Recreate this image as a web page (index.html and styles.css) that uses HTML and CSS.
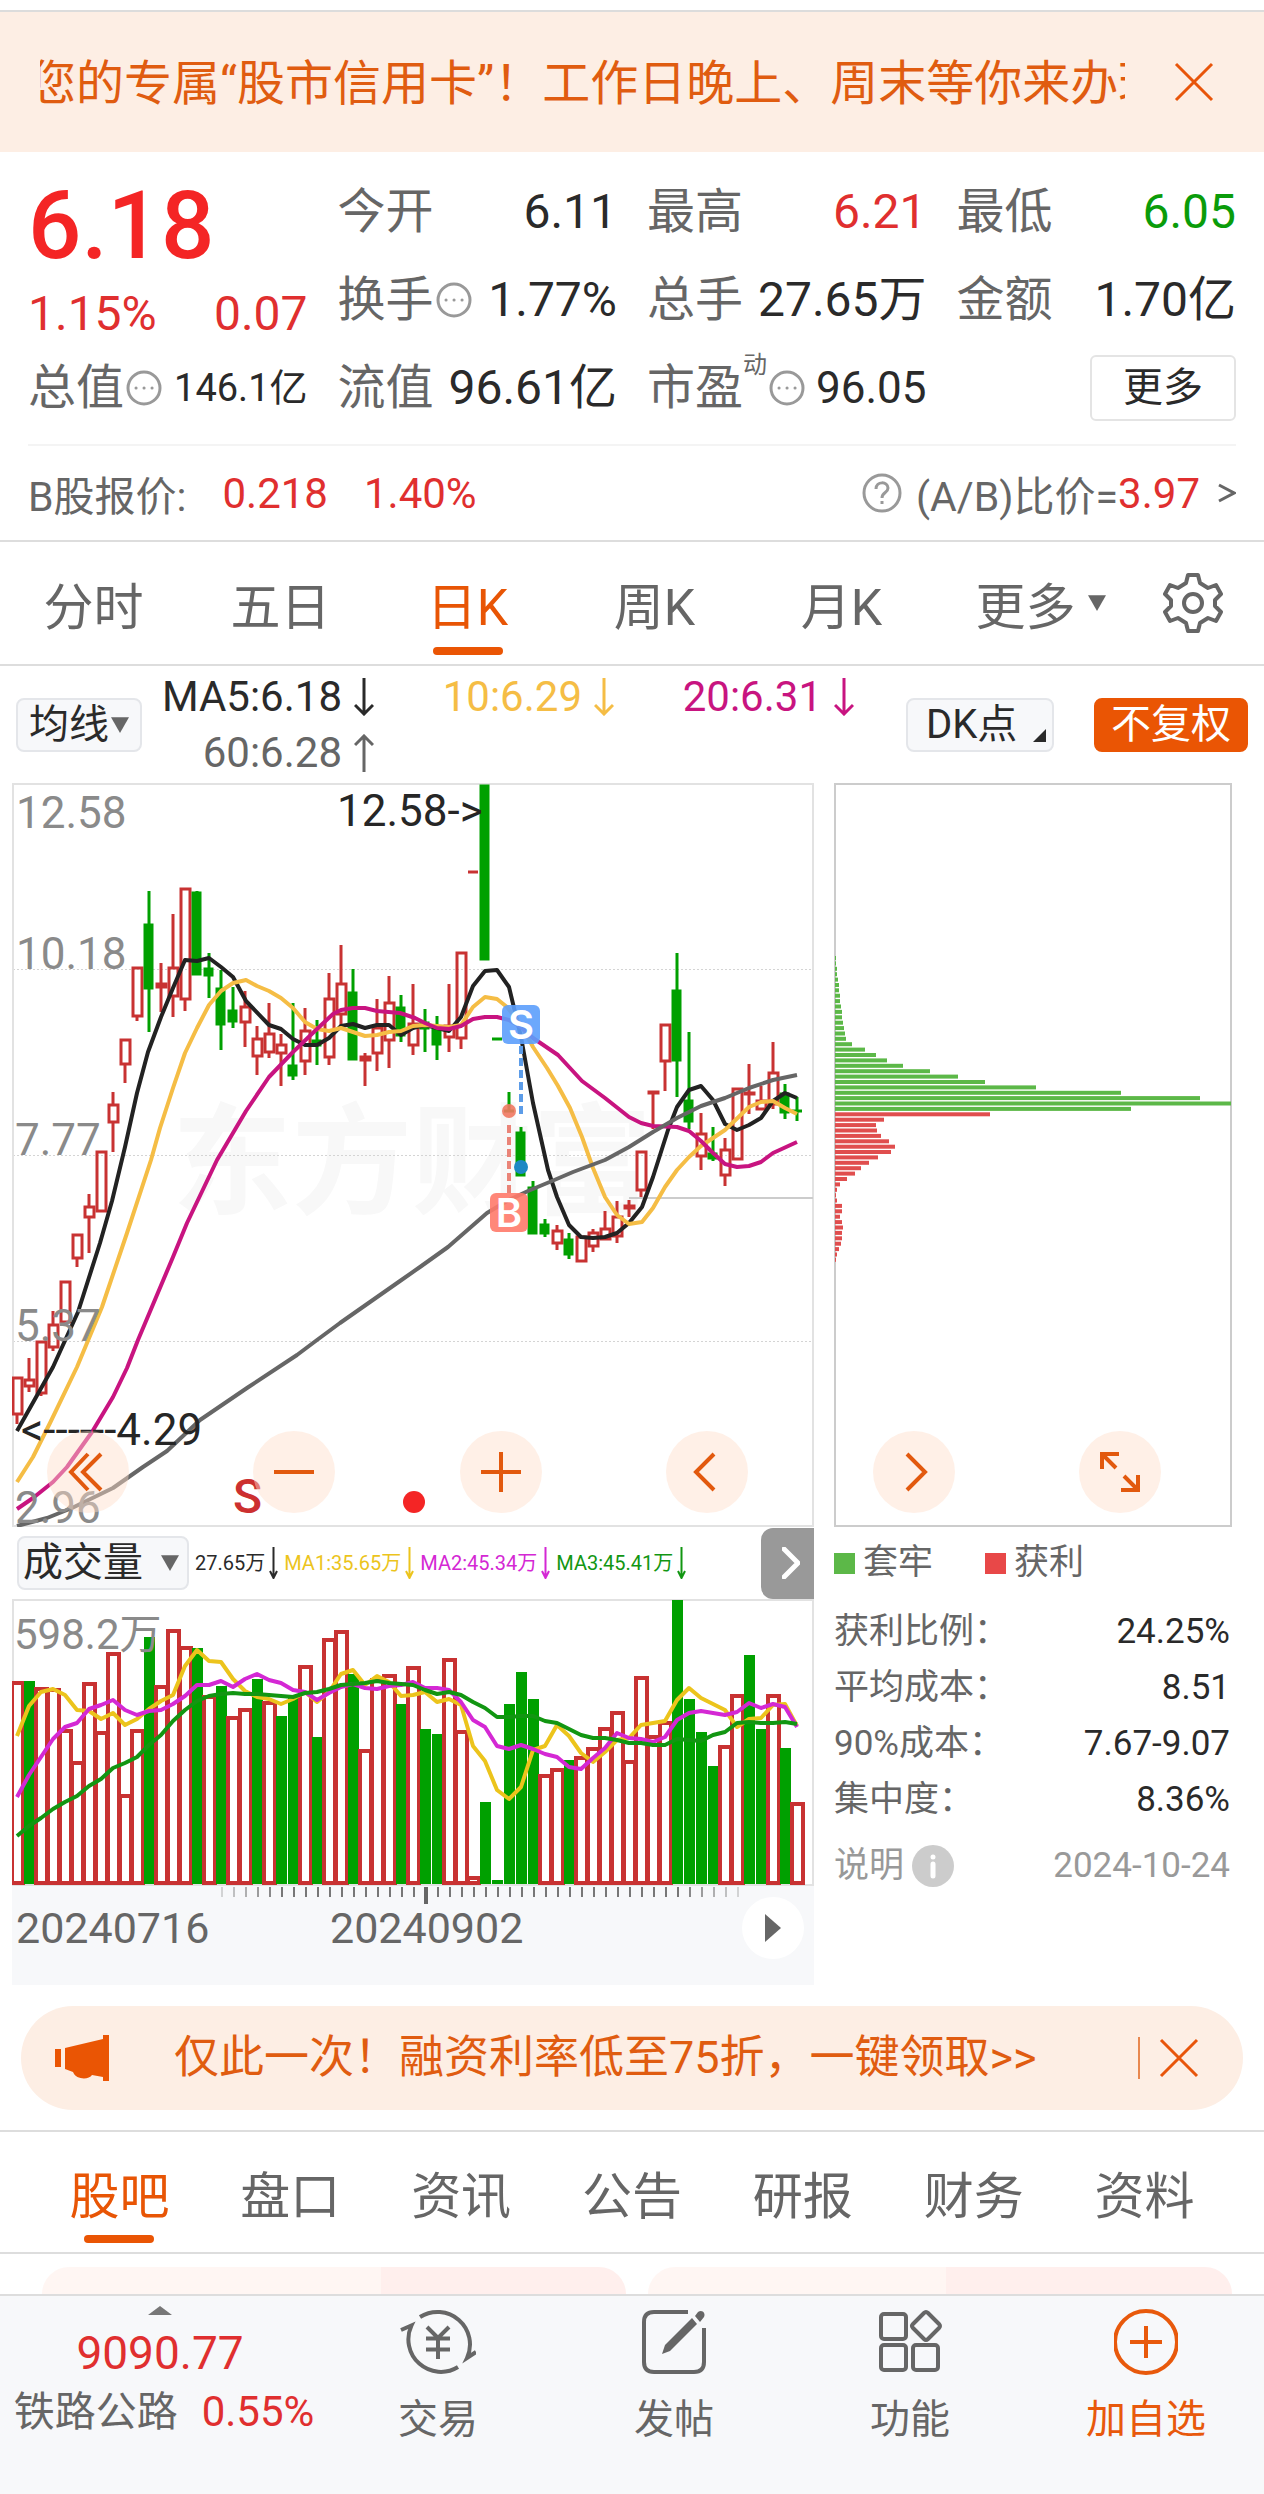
FILE: index.html
```html
<!DOCTYPE html>
<html lang="zh-CN">
<head>
<meta charset="utf-8">
<meta name="viewport" content="width=device-width, initial-scale=1">
<title>日K 行情</title>
<link rel="stylesheet" href="styles.css">
</head>
<body>
<div class="page">
  <aside class="notice">
    <p class="notice-text"><span>您的专属“股市信用卡”！工作日晚上、周末等你来办理</span></p>
    <button class="icon-button" type="button" aria-label="关闭">
      <svg class="close-icon" viewBox="0 0 40 40"><path d="M2 2 38 38M38 2 2 38"/></svg>
    </button>
  </aside>

  <section class="quote">
    <div class="price-block">
      <strong class="price">6.18</strong>
      <div class="change up"><span>1.15%</span><span>0.07</span></div>
    </div>
    <div class="cell"><span class="label">今开</span><span class="value">6.11</span></div>
    <div class="cell"><span class="label">最高</span><span class="value up">6.21</span></div>
    <div class="cell"><span class="label">最低</span><span class="value down">6.05</span></div>
    <div class="cell"><span class="label">换手<svg class="dots" viewBox="0 0 36 36"><circle cx="18" cy="18" r="16"/><path d="M10 18h.1M18 18h.1M26 18h.1"/></svg></span><span class="value">1.77%</span></div>
    <div class="cell"><span class="label">总手</span><span class="value">27.65万</span></div>
    <div class="cell"><span class="label">金额</span><span class="value">1.70亿</span></div>
    <div class="cell"><span class="label">总值<svg class="dots" viewBox="0 0 36 36"><circle cx="18" cy="18" r="16"/><path d="M10 18h.1M18 18h.1M26 18h.1"/></svg></span><span class="value small">146.1亿</span></div>
    <div class="cell"><span class="label">流值</span><span class="value">96.61亿</span></div>
    <div class="cell"><span class="label">市盈<span class="super">动</span><svg class="dots" viewBox="0 0 36 36"><circle cx="18" cy="18" r="16"/><path d="M10 18h.1M18 18h.1M26 18h.1"/></svg></span><span class="value medium">96.05</span></div>
    <div class="cell end"><button class="more-button" type="button">更多</button></div>
  </section>

  <section class="b-share">
    <span class="label">B股报价:</span>
    <span class="up b-price">0.218</span>
    <span class="up">1.40%</span>
    <a class="ratio" href="#ratio">
      <svg class="help" viewBox="0 0 40 40"><circle cx="20" cy="20" r="18"/><path d="M14 16c0-8 12-8 12-1 0 5-6 4-6 10M20 28v3"/></svg>
      <span class="label">(A/B)比价=</span><span class="up">3.97</span><svg class="chev" viewBox="0 0 18 22"><path d="M1 3l15 8-15 8"/></svg>
    </a>
  </section>

  <nav class="period-tabs">
    <a href="#fs">分时</a>
    <a href="#d5">五日</a>
    <a class="active" href="#dk">日K</a>
    <a href="#wk">周K</a>
    <a href="#mk">月K</a>
    <a class="more-tab" href="#more">更多<svg class="tri" viewBox="0 0 16 16"><path d="M0 1h16L8 15z"/></svg></a>
    <button class="icon-button" type="button" aria-label="设置">
      <svg class="gear" viewBox="0 0 60 60"><path d="M25 2h10l2 8 8 5 8-3 5 9-6 6v6l6 6-5 9-8-3-8 5-2 8H25l-2-8-8-5-8 3-5-9 6-6v-6l-6-6 5-9 8 3 8-5z"/><circle cx="30" cy="30" r="9"/></svg>
    </button>
  </nav>

  <section class="ma-bar">
    <button class="chip-button" type="button">均线<svg class="tri" viewBox="0 0 16 16"><path d="M0 1h16L8 15z"/></svg></button>
    <div class="ma-values">
      <span class="ma5">MA5:6.18<svg class="arrow" viewBox="0 0 20 38"><path d="M10 0v36M1 27l9 9 9-9"/></svg></span>
      <span class="ma10">10:6.29<svg class="arrow" viewBox="0 0 20 38"><path d="M10 0v36M1 27l9 9 9-9"/></svg></span>
      <span class="ma20">20:6.31<svg class="arrow" viewBox="0 0 20 38"><path d="M10 0v36M1 27l9 9 9-9"/></svg></span>
      <span class="ma60">60:6.28<svg class="arrow" viewBox="0 0 20 38"><path d="M10 38V2M1 11l9-9 9 9"/></svg></span>
    </div>
    <button class="chip-button dk" type="button">DK点<svg class="corner" viewBox="0 0 13 13"><path d="M13 0v13H0z"/></svg></button>
    <button class="chip-button adjust" type="button">不复权</button>
  </section>

  <section class="charts">
    <svg class="chart" viewBox="12 783 802 744" role="img" aria-label="日K线">
      <g class="watermark"><text x="172" y="1205">东方财富</text></g>
      <path class="grid-line" d="M13 969.500H812M13 1155.500H812M13 1341.500H812"/>
      <path class="frame" d="M13 784H813V1526H13z"/>
      <path class="last-price" d="M629 1198H813"/>
      <g id="candles"></g>
      <g id="averages"></g>
      <g class="axis-text">
        <text x="16" y="828">12.58</text><text x="16" y="969">10.18</text>
        <text x="15" y="1155">7.77</text><text x="15" y="1341">5.37</text><text x="15" y="1523">2.96</text>
      </g>
      <g class="peak-text"><text x="337" y="826">12.58-&gt;</text><text x="21" y="1445">&lt;------4.29</text></g>
      <path class="sell-line" d="M521 1046V1114"/>
      <path class="buy-line" d="M509 1125V1193"/>
      <circle class="buy-dot" cx="509" cy="1111" r="7"/>
      <circle class="sell-dot" cx="521" cy="1167" r="7"/>
      <rect class="sell-badge" x="502" y="1005" width="38" height="39" rx="6"/>
      <rect class="buy-badge" x="490" y="1193" width="38" height="39" rx="6"/>
      <g class="badge-text"><text x="521" y="1039">S</text><text x="509" y="1227">B</text></g>
      <text class="signal" x="233" y="1513">S</text>
      <circle class="event-dot" cx="414" cy="1502" r="11"/>
    </svg>
    <svg class="chart" viewBox="834 783 398 744" role="img" aria-label="筹码分布">
      <path class="chip-frame" d="M835 784H1231V1526H835z"/>
      <g id="chips"></g>
    </svg>
    <div class="chart-controls">
      <button type="button" aria-label="快退"><svg viewBox="0 0 40 40"><path d="M20 2 3 20l17 18M33 2 15 20l18 18"/></svg></button>
      <button type="button" aria-label="缩小"><svg viewBox="0 0 40 40"><path d="M0 20h40"/></svg></button>
      <button type="button" aria-label="放大"><svg viewBox="0 0 40 40"><path d="M0 20h40M20 0v40"/></svg></button>
      <button type="button" aria-label="后退"><svg viewBox="0 0 40 40"><path d="M27 2 9 20l18 18"/></svg></button>
      <button type="button" aria-label="前进"><svg viewBox="0 0 40 40"><path d="M13 2l18 18-18 18"/></svg></button>
      <button type="button" aria-label="全屏"><svg viewBox="0 0 40 40"><path d="M2 17V2h17M2 2l14 14M38 23v15H21M38 38 24 24"/></svg></button>
    </div>
  </section>

  <section class="lower">
    <div class="volume">
      <header class="volume-head">
        <button class="chip-button" type="button">成交量<svg class="tri" viewBox="0 0 16 16"><path d="M0 1h16L8 15z"/></svg></button>
        <p class="volume-values">
          <span>27.65万<svg class="thin-arrow" viewBox="0 0 9 32"><path d="M4.500 0v30M1 24l3.500 7L8 24"/></svg></span>
          <span class="v1">MA1:35.65万<svg class="thin-arrow" viewBox="0 0 9 32"><path d="M4.500 0v30M1 24l3.500 7L8 24"/></svg></span>
          <span class="v2">MA2:45.34万<svg class="thin-arrow" viewBox="0 0 9 32"><path d="M4.500 0v30M1 24l3.500 7L8 24"/></svg></span>
          <span class="v3">MA3:45.41万<svg class="thin-arrow" viewBox="0 0 9 32"><path d="M4.500 0v30M1 24l3.500 7L8 24"/></svg></span>
        </p>
        <button class="expand" type="button" aria-label="展开"><svg viewBox="0 0 18 32"><path d="M2 2l14 14L2 30"/></svg></button>
      </header>
      <svg class="chart" viewBox="12 1599 802 287" role="img" aria-label="成交量">
        <path class="frame" d="M13 1600H813V1885H13z"/>
        <g id="volumes"></g>
        <g id="volume-averages"></g>
        <g class="axis-text volume-max"><text x="14" y="1649">598.2万</text></g>
      </svg>
      <div class="timeline">
        <svg class="chart" viewBox="12 1886 802 99" role="img" aria-label="日期">
          <g id="ticks"></g>
          <g class="date-text"><text x="16" y="1943">20240716</text><text x="330" y="1943">20240902</text></g>
        </svg>
        <button class="play" type="button" aria-label="播放"><svg viewBox="0 0 16 28"><path d="M0 0l16 14L0 28z"/></svg></button>
      </div>
    </div>
    <div class="chip-stats">
      <div class="legend"><span class="trapped">套牢</span><span class="profit">获利</span></div>
      <dl>
        <div><dt>获利比例：</dt><dd>24.25%</dd></div>
        <div><dt>平均成本：</dt><dd>8.51</dd></div>
        <div><dt>90%成本：</dt><dd>7.67-9.07</dd></div>
        <div><dt>集中度：</dt><dd>8.36%</dd></div>
      </dl>
      <div class="stats-note">
        <span>说明</span>
        <svg class="info" viewBox="0 0 42 42"><circle cx="21" cy="21" r="21"/><path d="M21 19v12M21 12v.1"/></svg>
        <time datetime="2024-10-24">2024-10-24</time>
      </div>
    </div>
  </section>

  <aside class="promo">
    <svg class="horn" viewBox="0 0 54 46"><path d="M0 14h6v18H0zM10 13 48 4V0h6v46h-6v-4l-11-2c-3 5-16 5-19-3l-8-3z"/></svg>
    <a href="#promo">仅此一次！融资利率低至75折，一键领取&gt;&gt;</a>
    <button class="icon-button" type="button" aria-label="关闭">
      <svg class="close-icon" viewBox="0 0 40 40"><path d="M2 2 38 38M38 2 2 38"/></svg>
    </button>
  </aside>

  <nav class="content-tabs">
    <a class="active" href="#guba">股吧</a>
    <a href="#pankou">盘口</a>
    <a href="#zixun">资讯</a>
    <a href="#gonggao">公告</a>
    <a href="#yanbao">研报</a>
    <a href="#caiwu">财务</a>
    <a href="#ziliao">资料</a>
  </nav>

  <div class="cards"><div class="card"></div><div class="card wide"></div></div>

  <footer class="bottom-bar">
    <a class="index" href="#index">
      <svg class="caret" viewBox="0 0 24 9"><path d="M0 9 12 0l12 9z"/></svg>
      <span class="index-value up">9090.77</span>
      <span class="index-name">铁路公路<span class="up">0.55%</span></span>
    </a>
    <a href="#trade">
      <svg class="bar-icon" viewBox="0 0 76 72"><path d="M20 11A32.500 32.500 0 0 1 67 52L76 46M58 61A32.500 32.500 0 0 1 11.500 19.500L1 24M27 21 38 32 49 21M38 32V53M26 32.500H50M26 43.500H50"/></svg>
      交易
    </a>
    <a href="#post">
      <svg class="bar-icon" viewBox="0 0 64 72"><path d="M46 6H12Q2 6 2 16V56Q2 66 12 66H52Q62 66 62 56V22"/><path class="solid" d="M50 12l5 6-27 27-8 3 3-9zM56 6c4-3 8 1 6 5l-4 5-5-6z"/></svg>
      发帖
    </a>
    <a href="#tools">
      <svg class="bar-icon" viewBox="0 0 64 72"><rect x="3" y="8" width="25" height="25" rx="3"/><rect x="3" y="39" width="25" height="25" rx="3"/><rect x="35" y="39" width="25" height="25" rx="3"/><path d="M46 7q2-2 4 0l11 11q2 2 0 4L50 33q-2 2-4 0L35 22q-2-2 0-4z"/></svg>
      功能
    </a>
    <a class="add" href="#add">
      <svg class="bar-icon" viewBox="0 0 64 72"><circle cx="32" cy="36" r="31"/><path d="M16 36h32M32 20v32"/></svg>
      加自选
    </a>
  </footer>
</div>
<script src="chart.js"></script>
</body>
</html>
```

FILE: styles.css
```css
* { box-sizing: border-box; }

body {
  margin: 0;
  background: #fff;
  color: #2a2a2a;
  font-family: Roboto, "Noto Sans CJK SC", sans-serif;
  font-size: 40px;
}

button {
  margin: 0;
  padding: 0;
  border: 0;
  background: none;
  color: inherit;
  font: inherit;
  cursor: pointer;
}

a { color: inherit; text-decoration: none; }
p, dl, dd { margin: 0; }
svg { display: block; flex: none; fill: none; }

.up { color: #e02f2f; }
.down { color: #0a9c0a; }
.label { color: #666; }

.page { padding-top: 10px; }

.icon-button { display: flex; align-items: center; justify-content: center; }
.close-icon { width: 40px; height: 40px; stroke: #e8550a; stroke-width: 3; }

/* Scrolling notice */
.notice {
  display: flex;
  align-items: center;
  gap: 49px;
  height: 142px;
  padding: 0 50px 0 40px;
  border-top: 2px solid #dcdcdc;
  background: #fdeee4;
  color: #e05c10;
}
.notice-text { flex: 1; min-width: 0; overflow: hidden; padding-top: 4px; white-space: nowrap; font-size: 48px; line-height: 72px; }
.notice-text span { margin-left: -12px; }

/* Quote */
.quote {
  display: grid;
  grid-template-columns: repeat(4, 1fr);
  grid-auto-rows: 88px;
  column-gap: 30px;
  margin: 0 28px;
  padding: 16px 0 12px;
  border-bottom: 2px solid #f4f4f4;
  font-size: 48px;
  white-space: nowrap;
}
.price-block { grid-row: span 2; }
.price { display: block; color: #f42525; font-size: 94px; font-weight: 500; line-height: 116px; }
.change { display: flex; justify-content: space-between; line-height: 60px; }
.cell { display: flex; align-items: center; justify-content: space-between; line-height: 88px; }
.cell .label { display: flex; align-items: center; }
.cell.end { justify-content: flex-end; }
.small { font-size: 38px; }
.medium { font-size: 44px; }
.super { align-self: flex-start; font-size: 24px; line-height: 42px; }
.dots { width: 36px; height: 36px; margin-left: 2px; stroke: #999; stroke-width: 3; stroke-linecap: round; }
.more-button { width: 146px; height: 66px; border: 2px solid #e4e4e4; border-radius: 6px; font-size: 40px; line-height: 60px; }

/* B share */
.b-share {
  display: flex;
  align-items: center;
  height: 96px;
  padding: 0 28px;
  border-bottom: 2px solid #ddd;
  font-size: 42px;
  white-space: nowrap;
}
.b-share .label { font-size: 41px; }
.b-price { margin: 0 36px; }
.ratio { display: flex; align-items: center; margin-left: auto; }
.help { width: 40px; height: 40px; margin-right: 14px; stroke: #999; stroke-width: 3; }
.chev { width: 18px; height: 22px; margin-left: 18px; stroke: #666; stroke-width: 3; }

/* Tabs */
.period-tabs {
  display: grid;
  grid-template-columns: repeat(6, 187fr) 142fr;
  height: 124px;
  border-bottom: 2px solid #ddd;
}
.period-tabs a, .content-tabs a {
  position: relative;
  display: flex;
  align-items: center;
  justify-content: center;
  color: #666;
  font-size: 50px;
  white-space: nowrap;
}
.period-tabs .active, .content-tabs .active { color: #e85505; }
.active::after {
  content: "";
  position: absolute;
  bottom: 9px;
  left: calc(50% - 35px);
  width: 70px;
  height: 8px;
  border-radius: 4px;
  background: #ea5504;
}
.tri { width: 18px; height: 18px; fill: #666; }
.period-tabs .more-tab { padding-left: 24px; }
.period-tabs .tri { margin-left: 12px; }
.gear { width: 60px; height: 60px; stroke: #666; stroke-width: 4; stroke-linejoin: round; }

/* Moving averages */
.ma-bar { display: flex; align-items: center; height: 117px; padding: 0 16px; }
.chip-button {
  display: flex;
  align-items: center;
  gap: 2px;
  height: 54px;
  padding: 0 11px;
  border: 2px solid #e4e6ea;
  border-radius: 8px;
  background: #f7f8fa;
  font-size: 40px;
  line-height: 50px;
  white-space: nowrap;
}
.ma-values {
  display: grid;
  grid-template-columns: 232px 240px 240px;
  flex: 1;
  font-size: 42px;
  line-height: 56px;
}
.ma-values span { display: flex; align-items: center; justify-content: flex-end; gap: 12px; white-space: nowrap; }
.arrow { width: 20px; height: 38px; stroke: currentColor; stroke-width: 3; }
.ma10 { color: #f5bd45; }
.ma20 { color: #c81480; }
.ma60 { color: #666; }
.chip-button.dk { width: 148px; padding: 0 4px 0 18px; gap: 16px; }
.corner { width: 13px; height: 13px; align-self: flex-end; margin-bottom: 8px; fill: #2a2a2a; }
.chip-button.adjust { margin-left: 40px; width: 154px; justify-content: center; border-color: #ea5504; background: #ea5504; color: #fff; }

/* Charts */
.charts, .lower {
  display: grid;
  grid-template-columns: 802fr 398fr;
  column-gap: 20px;
  padding: 0 32px 0 12px;
}
.charts { position: relative; }
.chart { width: 100%; height: auto; }
.frame { stroke: #e2e2e2; stroke-width: 2; }
.chip-frame { stroke: #ccc; stroke-width: 2; }
.grid-line { stroke: #d4d4d4; stroke-width: 1; stroke-dasharray: 2 2; }
.last-price { stroke: #ccc; stroke-width: 2; }
.watermark { fill: #f8f8f8; font-size: 120px; font-weight: 700; }
.axis-text { fill: #8a8a8a; font-size: 44px; }
.peak-text { fill: #262626; font-size: 44px; }
.volume-max { font-size: 42px; }
.date-text { fill: #666; font-size: 43px; }
.rise { stroke: #c83232; stroke-width: 3; fill: none; }
.fall { stroke: #00a000; stroke-width: 3; fill: #00a000; }
.rise-volume { stroke: #c83232; stroke-width: 4; fill: none; }
.fall-volume { fill: #00a000; }
.avg { stroke-width: 4; stroke-linejoin: round; }
.avg-black { stroke: #222; }
.avg-yellow { stroke: #f5bd45; }
.avg-pink { stroke: #c81480; }
.avg-gray { stroke: #666; }
.avg-gold { stroke: #ecc41c; }
.avg-purple { stroke: #d428d4; }
.avg-green { stroke: #129612; }
.chip-trapped { fill: #5cb848; }
.chip-profit { fill: #e04e4e; }
.tick { stroke: #777; stroke-width: 2; }
.tick-major { stroke: #666; stroke-width: 4; }
.sell-line { stroke: #5c9ce8; stroke-width: 4; stroke-dasharray: 8 4; }
.buy-line { stroke: #ea8478; stroke-width: 4; stroke-dasharray: 8 4; }
.buy-dot { fill: #f07860; opacity: .9; }
.sell-dot { fill: #1c88c4; }
.sell-badge { fill: #5c9ffc; opacity: .9; }
.buy-badge { fill: #ff7a6a; opacity: .9; }
.badge-text { fill: #fff; font-family: Inter, sans-serif; font-size: 40px; font-weight: 600; text-anchor: middle; }
.signal { fill: #cc3030; font-size: 48px; font-weight: 500; }
.event-dot { fill: #f42525; }

.chart-controls {
  position: absolute;
  right: 103px;
  bottom: 14px;
  left: 47px;
  display: flex;
  justify-content: space-between;
}
.chart-controls button {
  display: flex;
  align-items: center;
  justify-content: center;
  width: 82px;
  height: 82px;
  border-radius: 50%;
  background: rgba(255, 222, 202, .45);
}
.chart-controls svg { width: 40px; height: 40px; stroke: #e2590e; stroke-width: 4; }

.volume-head { display: flex; align-items: center; height: 72px; padding-left: 5px; }
.volume-head .chip-button { width: 172px; padding: 0 8px 0 4px; justify-content: space-between; }
.volume-values { display: flex; flex: 1; gap: 6px; padding-left: 6px; font-size: 20px; line-height: 32px; white-space: nowrap; }
.volume-values span { display: flex; align-items: center; gap: 4px; }
.thin-arrow { width: 9px; height: 32px; stroke: currentColor; stroke-width: 2; }
.v1 { color: #ecc41c; }
.v2 { color: #d428d4; }
.v3 { color: #129612; }
.expand { display: flex; align-items: center; justify-content: center; width: 53px; height: 71px; padding-left: 6px; border-radius: 12px 0 0 12px; background: #999; }
.expand svg { width: 18px; height: 32px; stroke: #fff; stroke-width: 5; stroke-linecap: round; }

.timeline { position: relative; background: #f7f8fa; }
.play {
  position: absolute;
  top: 11px;
  right: 10px;
  display: flex;
  align-items: center;
  justify-content: center;
  width: 62px;
  height: 62px;
  border-radius: 50%;
  background: #fff;
}
.play svg { width: 16px; height: 28px; fill: #666; }

.chip-stats { padding-right: 2px; color: #666; font-size: 35px; white-space: nowrap; }
.legend { display: flex; gap: 52px; margin: 19px 0 24px; line-height: 34px; }
.legend span { display: flex; align-items: center; gap: 8px; }
.legend span::before { content: ""; width: 21px; height: 21px; background: #5cb848; }
.legend .profit::before { background: #e84848; }
.chip-stats dl div { display: flex; justify-content: space-between; line-height: 56px; }
.chip-stats dd { color: #2a2a2a; }
.stats-note { display: flex; align-items: center; margin-top: 10px; color: #999; line-height: 56px; }
.stats-note time { margin-left: auto; }
.info { width: 42px; height: 42px; margin-left: 8px; fill: #ccc; }
.info path { stroke: #fff; stroke-width: 5; stroke-linecap: round; }

/* Promo */
.promo {
  display: flex;
  align-items: center;
  height: 104px;
  margin: 21px 21px 20px;
  padding: 0 44px 0 34px;
  border-radius: 52px;
  background: #fdeee4;
  color: #e05c10;
  font-size: 45px;
}
.horn { width: 54px; height: 46px; fill: #ea5504; }
.promo a { flex: 1; margin-left: 65px; line-height: 60px; white-space: nowrap; }
.promo .icon-button { height: 42px; padding-left: 19px; border-left: 2px solid #e8884f; }

/* Content tabs */
.content-tabs {
  display: grid;
  grid-template-columns: repeat(7, 1fr);
  height: 124px;
  padding: 0 34px;
  border-top: 2px solid #ddd;
  border-bottom: 2px solid #ddd;
}

.cards { display: grid; grid-template-columns: 1fr 1fr; gap: 22px; height: 40px; padding: 13px 32px 0 42px; }
.card { border-radius: 28px 28px 0 0; background: linear-gradient(90deg, #fff6f3 58%, #ffefed 58%); }
.card.wide { background: linear-gradient(90deg, #fff6f3 51%, #ffefed 51%); }

/* Bottom bar */
.bottom-bar {
  display: grid;
  grid-template-columns: 320fr repeat(4, 236fr);
  min-height: 200px;
  border-top: 2px solid #ddd;
  background: #f7f8fa;
  color: #666;
}
.bottom-bar a { display: flex; flex-direction: column; align-items: center; padding-top: 10px; line-height: 56px; white-space: nowrap; }
.bar-icon { height: 72px; margin-bottom: 14px; stroke: currentColor; stroke-width: 4; }
.bar-icon .solid { fill: currentColor; stroke: none; }
.caret { width: 24px; height: 9px; fill: #777; }
.index-value { font-size: 46px; line-height: 76px; }
.index-name { display: flex; gap: 24px; padding-left: 8px; font-size: 41px; line-height: 42px; }
.index-name .up { font-size: 42px; }
.bottom-bar .add { color: #e8590c; }
```

FILE: chart.js
```js
// Horizontal position of trading day i inside the charts.
const dayX = i => 17 + 12 * i;

// [direction, high, body top, body bottom, low] for each day.
const candles = [
  ['r',1377,1377,1414,1424],['r',1358,1379,1386,1392],['r',1341,1341,1393,1396],['r',1311,1324,1347,1351],
  ['r',1281,1281,1322,1322],['r',1234,1234,1258,1267],['r',1194,1206,1217,1253],['r',1151,1151,1211,1211],
  ['r',1092,1104,1122,1152],['r',1039,1039,1064,1083],['r',967,967,1016,1021],['g',891,924,988,1032],
  ['r',963,983,987,1012],['r',914,967,996,1017],['r',888,888,999,1011],['g',891,892,974,975],
  ['g',953,968,975,998],['g',970,988,1024,1050],['g',987,1010,1021,1028],['r',991,1006,1022,1047],
  ['r',1026,1038,1056,1075],['r',1003,1033,1052,1058],['r',1034,1044,1053,1086],['g',1003,1065,1075,1080],
  ['r',1008,1030,1061,1075],['g',1020,1040,1045,1065],['r',973,998,1057,1065],['r',945,983,1014,1030],
  ['g',969,992,1059,1060],['r',1053,1056,1060,1086],['r',999,1027,1053,1071],['r',976,1002,1040,1068],
  ['g',995,1007,1035,1042],['r',984,1023,1045,1055],['g',1009,1022,1028,1052],['g',1016,1029,1044,1060],
  ['r',984,1025,1037,1052],['r',952,952,1038,1049],['r',872,872,872,872],['g',785,785,959,959],
  ['g',1039,1039,1039,1039],['g',1092,1111,1111,1111],['g',1127,1132,1175,1175],['g',1181,1187,1233,1233],
  ['g',1219,1224,1233,1237],['r',1225,1230,1243,1250],['g',1233,1239,1254,1259],['r',1236,1236,1261,1261],
  ['r',1229,1232,1246,1252],['r',1211,1228,1239,1239],['r',1201,1216,1236,1243],['r',1200,1205,1208,1217],
  ['r',1151,1151,1190,1197],['r',1091,1091,1092,1129],['r',1024,1024,1061,1091],['g',953,990,1060,1097],
  ['g',1032,1100,1121,1129],['r',1113,1133,1156,1170],['g',1127,1153,1158,1161],['r',1138,1149,1175,1186],
  ['r',1088,1088,1159,1159],['r',1064,1092,1094,1114],['r',1086,1100,1109,1109],['r',1042,1072,1104,1109],
  ['g',1084,1093,1112,1119],['g',1097,1111,1111,1121]
];

// Volume bar tops, one per day.
const volumes = [1682,1681,1688,1689,1730,1762,1683,1732,1653,1795,1730,1637,1686,1630,1647,1648,1696,1686,
  1717,1709,1679,1702,1716,1698,1666,1737,1639,1631,1674,1750,1679,1675,1704,1667,1729,1734,1659,1731,1877,
  1802,1880,1704,1672,1699,1775,1769,1760,1757,1748,1728,1712,1761,1677,1736,1722,1600,1699,1732,1766,1746,
  1695,1655,1729,1695,1748,1803];
const fallingVolume = new Set([1,11,15,17,20,22,23,25,28,32,34,35,39,40,41,42,43,46,55,56,57,58,61,62,64]);

const averages = {
  black: '17,1431 53,1367 78,1312 100,1243 112,1201 125,1147 137,1093 148,1052 161,1017 173,988 185,960 197,961 209,958 221,967 233,977 246,1001 269,1025 281,1029 293,1039 305,1045 317,1045 329,1038 341,1026 353,1024 365,1028 377,1025 389,1025 401,1035 413,1028 425,1025 437,1028 449,1031 461,1017 473,986 485,971 497,970 509,987 521,1037 533,1103 548,1170 557,1197 569,1225 581,1237 593,1238 605,1237 617,1233 629,1223 642,1207 653,1177 668,1130 677,1107 689,1090 701,1086 713,1100 725,1124 737,1130 749,1125 761,1118 773,1101 785,1093 797,1098',
  yellow: '17,1482 33,1457 50,1423 77,1367 102,1307 127,1233 151,1160 160,1128 173,1088 185,1053 197,1028 209,1005 221,991 233,983 246,980 257,986 269,991 281,998 293,1008 305,1022 317,1029 329,1031 341,1028 365,1036 377,1035 389,1032 401,1031 413,1026 425,1025 449,1027 461,1025 473,1007 485,997 497,999 507,1007 521,1025 533,1047 547,1068 558,1086 570,1108 582,1137 593,1168 605,1197 617,1215 629,1224 642,1222 653,1208 665,1187 677,1170 689,1157 701,1146 713,1138 725,1130 749,1107 761,1102 773,1101 785,1108 797,1114',
  pink: '17,1509 33,1498 53,1482 67,1467 92,1432 113,1397 127,1368 138,1340 173,1257 187,1223 217,1160 246,1111 269,1077 293,1052 317,1029 333,1014 341,1010 353,1008 365,1008 377,1011 400,1013 415,1018 425,1023 437,1028 449,1029 461,1026 473,1019 485,1017 497,1017 509,1020 521,1027 533,1038 558,1055 582,1081 605,1098 629,1117 641,1123 653,1126 677,1127 689,1131 701,1141 713,1153 725,1164 737,1167 749,1166 761,1162 773,1153 797,1142',
  gray: '17,1526 47,1518 72,1508 113,1488 143,1467 167,1451 200,1420 247,1388 297,1355 317,1340 340,1323 370,1302 400,1281 420,1267 448,1247 487,1213 507,1201 528,1191 552,1181 573,1172 605,1160 629,1147 653,1132 677,1118 701,1106 725,1098 749,1088 773,1080 797,1075'
};

// Volume averages, one value per day.
const volumeAverages = {
  gold: [1736,1706,1692,1689,1695,1710,1711,1719,1713,1725,1719,1709,1701,1695,1666,1650,1661,1662,1679,1691,1697,1699,1704,1699,1692,1702,1692,1674,1670,1685,1676,1682,1696,1695,1692,1702,1699,1705,1746,1761,1790,1799,1787,1750,1746,1725,1736,1753,1762,1752,1740,1738,1725,1723,1721,1700,1688,1698,1704,1710,1727,1719,1718,1705,1704,1726],
  purple: [1797,1775,1757,1739,1727,1723,1709,1705,1700,1710,1715,1711,1710,1704,1696,1685,1685,1681,1687,1679,1674,1680,1683,1690,1692,1700,1693,1687,1684,1688,1689,1686,1685,1682,1688,1688,1690,1702,1720,1727,1746,1749,1745,1749,1754,1757,1767,1769,1758,1748,1733,1738,1739,1742,1737,1720,1713,1711,1713,1715,1712,1703,1708,1704,1707,1727],
  green: [1836,1826,1818,1809,1802,1796,1786,1779,1768,1763,1757,1745,1735,1721,1710,1701,1696,1694,1693,1694,1694,1695,1696,1697,1693,1692,1689,1685,1684,1683,1681,1683,1684,1685,1690,1694,1692,1695,1702,1708,1717,1717,1716,1716,1721,1723,1729,1735,1738,1738,1740,1743,1743,1745,1745,1739,1740,1741,1735,1732,1723,1722,1723,1723,1722,1724]
};

// Cost distribution, in bar lengths from the top price level down.
const trapped = [1,1,2,2,3,4,4,5,5,6,7,7,8,9,10,11,17,30,41,52,68,95,123,150,201,286,365,396,296];
const profit = [155,49,41,42,46,54,60,56,43,34,26,20,12,5,2,1,2,7,7,5,7,8,7,7,6,4,2,1];

const put = (id, markup) => { document.getElementById(id).innerHTML = markup; };

put('candles', candles.map(([dir, high, top, bottom, low], i) => {
  const x = dayX(i);
  const cls = dir === 'r' ? 'rise' : 'fall';
  const height = bottom - top;
  const body = height > 0
    ? `<rect x="${x - 4}" y="${top + 1}" width="${dir === 'r' ? 9 : 7}" height="${Math.max(height - 1, 1)}"/>`
    : `<path d="M${x - 5} ${top}h10"/>`;
  return `<g class="${cls}"><path d="M${x} ${high}V${top}M${x} ${bottom}V${low}"/>${body}</g>`;
}).join(''));

put('averages', Object.entries(averages)
  .map(([name, points]) => `<polyline class="avg avg-${name}" points="${points}"/>`).join(''));

put('volumes', volumes.map((top, i) => {
  const x = dayX(i);
  return fallingVolume.has(i)
    ? `<rect class="fall-volume" x="${x - 5}" y="${top}" width="11" height="${1884 - top}"/>`
    : `<rect class="rise-volume" x="${x - 5}" y="${top + 1}" width="11" height="${Math.max(1882 - top, 3)}"/>`;
}).join(''));

put('volume-averages', Object.entries(volumeAverages)
  .map(([name, ys]) => `<polyline class="avg avg-${name}" points="${ys.map((y, i) => `${dayX(i)},${y}`).join(' ')}"/>`).join(''));

put('chips', [...trapped.map(w => ['trapped', w]), ...profit.map(w => ['profit', w])]
  .map(([kind, w], i) => `<rect class="chip-${kind}" x="835" y="${(956 + 5.39 * i).toFixed(1)}" width="${w}" height="4"/>`).join(''));

let ticks = '';
for (let x = 222; x <= 738; x += 12) {
  const fade = Math.min(1, (x - 198) / 84, (762 - x) / 84);
  ticks += x === 426
    ? `<path class="tick-major" d="M${x} 1887v17"/>`
    : `<path class="tick" opacity="${fade.toFixed(2)}" d="M${x} 1887v10"/>`;
}
put('ticks', ticks);
```
